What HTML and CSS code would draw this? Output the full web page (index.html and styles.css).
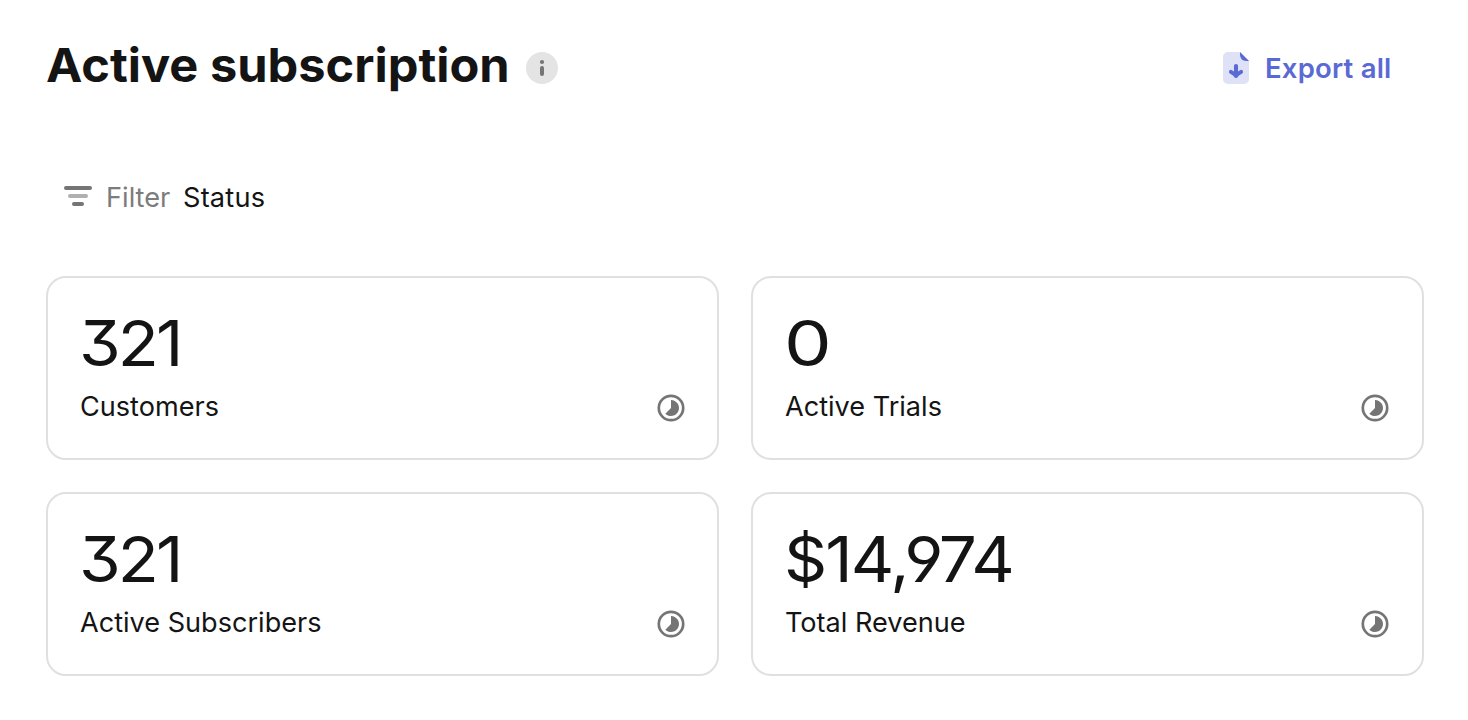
FILE: index.html
```html
<!DOCTYPE html>
<html lang="en">
<head>
<meta charset="utf-8">
<title>Active subscription</title>
<link rel="stylesheet" href="styles.css">
</head>
<body>
<svg class="defs" width="0" height="0" aria-hidden="true">
  <symbol id="progress" viewBox="0 0 28 28">
    <circle cx="14" cy="14" r="12.2" fill="none" stroke="#757575" stroke-width="2.7"/>
    <path d="M14 6a8 8 0 1 1-5.66 13.66L14 14z" fill="#757575"/>
  </symbol>
</svg>
<main class="page">
  <header class="header">
    <h1 class="title">Active subscription</h1>
    <svg class="info" viewBox="0 0 32 32"><circle cx="16" cy="16" r="16" fill="#e4e4e4"/><circle cx="16" cy="10" r="2.1" fill="#757575"/><rect x="14" y="14" width="4" height="10" rx="2" fill="#757575"/></svg>
    <a class="export">
      <svg class="export-icon" viewBox="0 0 26 32"><path d="M5 0H17L26 9V27a5 5 0 0 1-5 5H5a5 5 0 0 1-5-5V5a5 5 0 0 1 5-5z" fill="#dfe1f6"/><path d="M17 0L26 9H23a6 6 0 0 1-6-6z" fill="#5a6ad4"/><path d="M13 14V24M8 20C10 21 11.7 22 13 23.8C14.3 22 16 21 18 20" fill="none" stroke="#5a6ad4" stroke-width="4.1" stroke-linecap="round" stroke-linejoin="round"/></svg>
      <span class="export-label">Export all</span>
    </a>
  </header>
  <div class="filter">
    <svg class="filter-icon" viewBox="0 0 28 20"><rect width="28" height="4" rx="2" fill="#757575"/><rect x="4" y="8" width="20" height="4" rx="2" fill="#b0b0b0"/><rect x="8" y="16" width="12" height="4" rx="2" fill="#757575"/></svg>
    <span class="filter-label">Filter</span>
    <span class="filter-value">Status</span>
  </div>
  <section class="cards">
    <article class="card"><div class="number">321</div><div class="row"><span class="label">Customers</span><svg class="progress"><use href="#progress"/></svg></div></article>
    <article class="card card-right"><div class="number zero">0</div><div class="row"><span class="label">Active Trials</span><svg class="progress"><use href="#progress"/></svg></div></article>
    <article class="card"><div class="number">321</div><div class="row"><span class="label">Active Subscribers</span><svg class="progress"><use href="#progress"/></svg></div></article>
    <article class="card card-right"><div class="number money">$14,974</div><div class="row"><span class="label">Total Revenue</span><svg class="progress"><use href="#progress"/></svg></div></article>
  </section>
</main>
</body>
</html>
```
FILE: styles.css
```css
* { box-sizing: border-box; }
body { margin: 0; background: #fff; color: #141414; font-family: Inter, "Liberation Sans", sans-serif; }
.defs { display: block; }
.page { width: 1468px; height: 720px; padding: 36px 44px 0 46px; }
.header { display: flex; align-items: center; height: 64px; padding-right: 33px; }
.title { margin: -7px 18px 0 0; width: 462px; white-space: nowrap; font-size: 47px; line-height: 60px; font-weight: 700; transform: scaleX(1.037); transform-origin: 0 50%; }
.info { width: 32px; height: 32px; }
.export { display: flex; align-items: center; margin-left: auto; color: #5a6ad4; }
.export-icon { width: 26px; height: 32px; margin-right: 16px; }
.export-label { width: 126px; white-space: nowrap; font-size: 27.5px; line-height: 34px; font-weight: 600; letter-spacing: 0.2px; }
.filter { display: flex; align-items: center; height: 36px; margin: 80px 0 60px 18px; font-size: 27.2px; line-height: 36px; }
.filter-icon { width: 28px; height: 20px; margin: -4px 14px 0 0; }
.filter-label { width: 77px; color: #7c7c7c; }
.filter-value { letter-spacing: 0.2px; }
.cards { display: grid; grid-template-columns: 673px 673px; grid-auto-rows: 184px; gap: 32px; }
.card { border: 2px solid #e0e0e0; border-radius: 20px; padding: 25px 32px 0; }
.card-right { padding-right: 33px; }
.number { height: 80px; line-height: 80px; font-size: 63px; font-weight: 400; letter-spacing: -2.8px; white-space: nowrap; font-feature-settings: "cv09", "cv04"; transform: scaleX(1.07); transform-origin: 0 50%; width: 80%; margin-left: -1px; }
.zero { transform: scaleX(1.2); }
.money { letter-spacing: -1.8px; }
.row { display: flex; align-items: center; justify-content: space-between; height: 46px; margin-top: 2px; font-size: 27.1px; }
.label { margin-top: -3px; white-space: nowrap; }
.progress { width: 28px; height: 28px; }
```
